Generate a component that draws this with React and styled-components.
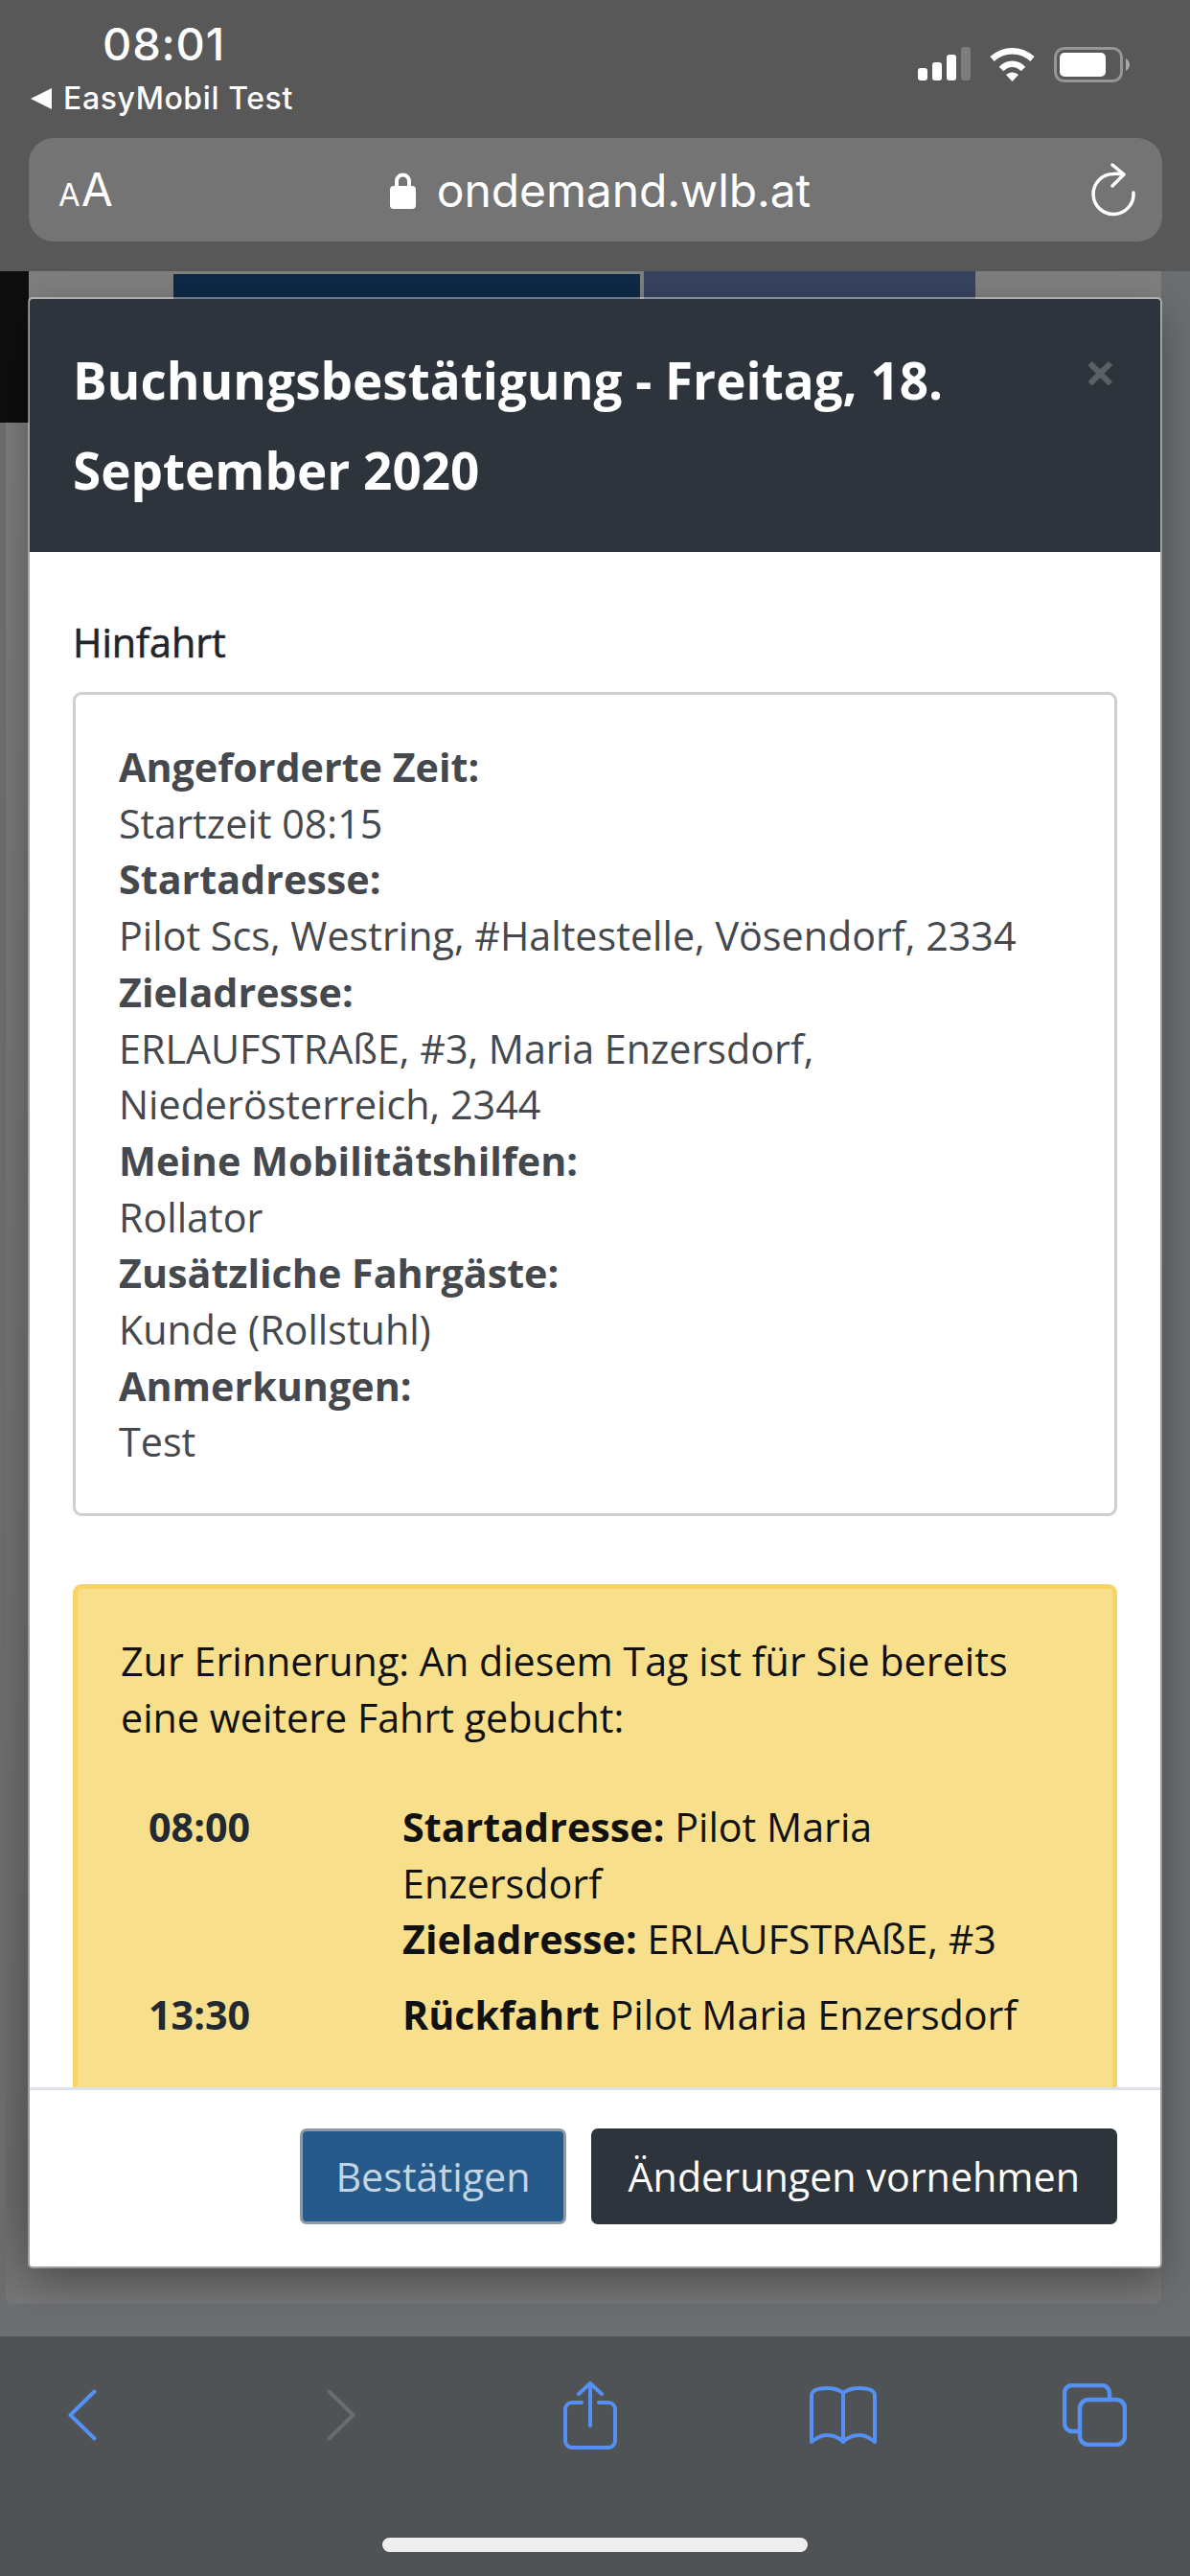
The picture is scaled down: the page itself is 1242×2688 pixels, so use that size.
import React from "react"
import styled, { createGlobalStyle } from "styled-components"

const GlobalStyle = createGlobalStyle`
  html, body {
    margin: 0;
    padding: 0;
    background: #585858;
  }
  * {
    box-sizing: border-box;
  }
`

const Screen = styled.div`
  display: flex;
  flex-direction: column;
  width: 1242px;
  height: 2688px;
  overflow: hidden;
  font-family: "Open Sans", sans-serif;
`

const TopBar = styled.header`
  display: flex;
  flex-direction: column;
  height: 283px;
  padding: 0 29px 0 30px;
  background: #585858;
  color: #fff;
  font-family: Inter, "Liberation Sans", sans-serif;
`

const StatusRow = styled.div`
  display: flex;
  justify-content: space-between;
  height: 144px;
`

const StatusLeft = styled.div`
  display: flex;
  flex-direction: column;
`

const Time = styled.div`
  margin: 21px 0 0 77px;
  font-size: 47px;
  line-height: 50px;
  font-weight: 500;
  letter-spacing: 0.8px;
`

const BackLink = styled.div`
  display: flex;
  align-items: center;
  gap: 12px;
  margin: 13px 0 0 2px;
  font-size: 32px;
  line-height: 38px;
  letter-spacing: 0.6px;
  font-weight: 500;
`

const BackArrow = styled.span`
  width: 0;
  height: 0;
  border-style: solid;
  border-width: 11px 22px 11px 0;
  border-color: transparent #fff transparent transparent;
`

const StatusIcons = styled.div`
  display: flex;
  align-items: flex-start;
  gap: 20px;
  margin: 49px 34px 0 0;
`

const UrlBar = styled.div`
  display: flex;
  align-items: center;
  justify-content: space-between;
  height: 108px;
  padding: 0 27px 0 31px;
  border-radius: 26px;
  background: #747474;
`

const ReaderLabel = styled.div`
  display: flex;
  align-items: baseline;
  width: 60px;
  font-size: 48px;
  line-height: 1;
  letter-spacing: 1px;
`

const SmallA = styled.span`
  font-size: 33px;
`

const Address = styled.div`
  display: flex;
  align-items: center;
  gap: 22px;
  margin-right: 6px;
  font-size: 48px;
  letter-spacing: -0.1px;
`

const PageArea = styled.main`
  position: relative;
  flex: 1;
  overflow: hidden;
  background: #6c6f72;
`

const BackdropCard = styled.div`
  position: absolute;
  left: 6px;
  top: 0;
  width: 1206px;
  height: 2121px;
  border-radius: 0 0 8px 8px;
  background: linear-gradient(#7f7f7f, #6a6a6a 95%, #777);
`

const BlackEdge = styled.div`
  position: absolute;
  left: 0;
  top: 0;
  width: 30px;
  height: 158px;
  background: #0e0e0e;
`

const Tile = styled.div`
  position: absolute;
  top: ${({ $inset }) => $inset}px;
  left: ${({ $left }) => $left}px;
  width: ${({ $width }) => $width}px;
  height: 40px;
  background: ${({ $color }) => $color};
`

const Modal = styled.section`
  position: absolute;
  left: 31px;
  top: 29px;
  display: flex;
  flex-direction: column;
  width: 1180px;
  height: 2053px;
  overflow: hidden;
  border-radius: 3px;
  background: #fff;
  box-shadow: 0 0 0 2px rgba(255, 255, 255, 0.4), 0 15px 45px rgba(0, 0, 0, 0.35);
`

const ModalHeader = styled.div`
  position: relative;
  flex: none;
  height: 264px;
  padding: 38px 45px 0;
  background: #2e343b;
`

const Title = styled.h2`
  margin: 0;
  width: 1040px;
  color: #fff;
  font-size: 53px;
  line-height: 94px;
  font-weight: 700;
`

const CloseMark = styled.span`
  position: absolute;
  top: 47px;
  right: 46px;
  color: #5a6066;
  font-size: 58px;
  line-height: 1;
  font-weight: 700;
`

const ModalBody = styled.div`
  flex: 1;
  min-height: 0;
  overflow: hidden;
  padding: 65px 45px 0;
`

const SectionLabel = styled.h3`
  margin: 0 0 23px;
  color: #212529;
  font-size: 41.25px;
  line-height: 58px;
  font-weight: 400;
  -webkit-text-stroke: 0.6px #212529;
`

const DetailCard = styled.div`
  height: 860px;
  padding: 46px 45px;
  border: 3px solid #cfcfcf;
  border-radius: 9px;
  color: #45484c;
  font-size: 41.25px;
  line-height: 58.7px;
`

const Line = styled.div`
  font-weight: ${({ $bold }) => ($bold ? 700 : 400)};
`

const Reminder = styled.div`
  height: 700px;
  margin-top: 71px;
  padding: 46px 45px 0;
  border: 5px solid #f8d466;
  border-bottom: 0;
  border-radius: 9px 9px 0 0;
  background: #f8df8b;
  color: #111;
  font-size: 41.25px;
  line-height: 58.5px;
`

const TripTable = styled.div`
  display: grid;
  grid-template-columns: 265px 1fr;
  row-gap: 20px;
  margin: 56px 0 0 29px;
`

const TripTime = styled.div`
  color: #212932;
  font-weight: 700;
`

const TripInfo = styled.div`
  width: 690px;
`

const ModalFooter = styled.div`
  display: flex;
  flex: none;
  justify-content: flex-end;
  gap: 26px;
  height: 187px;
  padding: 40px 45px 0;
  border-top: 3px solid #dee2e6;
`

const Button = styled.button`
  height: 100px;
  padding: 0 ${({ $pad }) => $pad}px;
  border: ${({ $muted }) => ($muted ? "3px solid #8d9aa6" : "0")};
  border-radius: 7px;
  background: ${({ $muted }) => ($muted ? "#265a8a" : "#2e343b")};
  color: ${({ $muted }) => ($muted ? "#c3d5e2" : "#fff")};
  font-family: "Open Sans", sans-serif;
  font-size: 41.25px;
`

const Toolbar = styled.nav`
  display: flex;
  flex-direction: column;
  flex: none;
  height: 250px;
  padding-top: 43px;
  background: #505356;
`

const ToolRow = styled.div`
  display: flex;
  align-items: center;
  height: 78px;
  padding-left: 71px;
`

const ToolSlot = styled.div`
  display: flex;
  margin-left: ${({ $gap }) => $gap}px;
`

const HomeBar = styled.div`
  align-self: center;
  width: 444px;
  height: 15px;
  margin-top: 89px;
  border-radius: 8px;
  background: #eee;
`

const Signal = () => (
  <svg width="55" height="35" viewBox="0 0 55 35">
    <rect x="0" y="22" width="10" height="13" rx="3" fill="#fff" />
    <rect x="15" y="16" width="10" height="19" rx="3" fill="#fff" />
    <rect x="30" y="8" width="10" height="27" rx="3" fill="#fff" />
    <rect x="45" y="0" width="10" height="35" rx="3" fill="#7c7c7c" />
  </svg>
)

const Wifi = () => (
  <svg width="47" height="36" viewBox="0 0 47 36" fill="none" stroke="#fff" strokeWidth="6.5">
    <path d="M2.5 12.5C15 1.5 32 1.5 44.5 12.5" />
    <path d="M12 23C19 16 28 16 35 23" />
    <path d="M23.5 36 17 29C21 25.5 26 25.5 30 29Z" fill="#fff" stroke="none" />
  </svg>
)

const Battery = () => (
  <svg width="79" height="37" viewBox="0 0 79 37">
    <rect x="1.5" y="1.5" width="69" height="34" rx="9" fill="none" stroke="#969696" strokeWidth="3" />
    <rect x="6" y="6" width="48" height="25" rx="5" fill="#fff" />
    <path d="M75 12c2.500 1.500 4 4 4 6.500s-1.500 5-4 6.500z" fill="#a8a8a8" />
  </svg>
)

const Lock = () => (
  <svg width="27" height="39" viewBox="0 0 27 39">
    <path d="M7 17V10a6.500 6.500 0 0 1 13 0v7" fill="none" stroke="#fff" strokeWidth="4" />
    <rect x="0" y="15" width="27" height="24" rx="4" fill="#fff" />
  </svg>
)

const Reload = () => (
  <svg width="48" height="56" viewBox="0 0 48 56" fill="none" stroke="#fff" strokeWidth="3.500" strokeLinecap="round" strokeLinejoin="round">
    <path d="M45 31A21 21 0 1 1 24 11.500C28 11 31 11.500 34 12" />
    <path d="M23 2 35 12 23 24" />
  </svg>
)

const Chevron = ({ color, flip }) => (
  <svg width="30" height="54" viewBox="0 0 30 54" fill="none" stroke={color} strokeWidth="4" strokeLinecap="round" strokeLinejoin="round">
    <path d={flip ? "M2.500 2.500 27.500 27 2.500 51.500" : "M27.500 2.500 2.500 27 27.500 51.500"} />
  </svg>
)

const Share = () => (
  <svg width="56" height="71" viewBox="0 0 56 71" fill="none" stroke="#5590f5" strokeWidth="4" strokeLinecap="round" strokeLinejoin="round">
    <path d="M19 22H9a7 7 0 0 0-7 7v33a7 7 0 0 0 7 7h38a7 7 0 0 0 7-7V29a7 7 0 0 0-7-7H37" />
    <path d="M28 46V3" />
    <path d="M16 13 28 2 40 13" />
  </svg>
)

const Book = () => (
  <svg width="70" height="60" viewBox="0 0 70 60" fill="none" stroke="#5590f5" strokeWidth="4" strokeLinecap="round" strokeLinejoin="round">
    <path d="M35 7C30 3 24 2 18 2 10 2 2 4 2 10V58C8 53 13 51 18 51c6 0 12 2 17 7 5-5 11-7 17-7 5 0 10 2 16 7V10c0-6-8-8-16-8-6 0-12 1-17 5V58" />
  </svg>
)

const Tabs = () => (
  <svg width="67" height="66" viewBox="0 0 67 66" fill="none" stroke="#5590f5" strokeWidth="4.500">
    <path d="M16 50H10a8 8 0 0 1-8-8V10a8 8 0 0 1 8-8h31a8 8 0 0 1 8 8v5" />
    <rect x="18" y="17" width="47" height="47" rx="9" />
  </svg>
)

const App = () => {
  return (
    <Screen>
      <GlobalStyle />
      <TopBar>
        <StatusRow>
          <StatusLeft>
            <Time>08:01</Time>
            <BackLink>
              <BackArrow />
              EasyMobil Test
            </BackLink>
          </StatusLeft>
          <StatusIcons>
            <Signal />
            <Wifi />
            <Battery />
          </StatusIcons>
        </StatusRow>
        <UrlBar>
          <ReaderLabel>
            <SmallA>A</SmallA>A
          </ReaderLabel>
          <Address>
            <Lock />
            ondemand.wlb.at
          </Address>
          <Reload />
        </UrlBar>
      </TopBar>

      <PageArea>
        <BackdropCard />
        <BlackEdge />
        <Tile $inset={3} $left={181} $width={487} $color="#0e2a47" />
        <Tile $inset={0} $left={672} $width={346} $color="#38445f" />
        <Modal>
          <ModalHeader>
            <Title>Buchungsbestätigung - Freitag, 18. September 2020</Title>
            <CloseMark>×</CloseMark>
          </ModalHeader>
          <ModalBody>
            <SectionLabel>Hinfahrt</SectionLabel>
            <DetailCard>
              <Line $bold>Angeforderte Zeit:</Line>
              <Line>Startzeit 08:15</Line>
              <Line $bold>Startadresse:</Line>
              <Line>Pilot Scs, Westring, #Haltestelle, Vösendorf, 2334</Line>
              <Line $bold>Zieladresse:</Line>
              <Line>ERLAUFSTRAßE, #3, Maria Enzersdorf,</Line>
              <Line>Niederösterreich, 2344</Line>
              <Line $bold>Meine Mobilitätshilfen:</Line>
              <Line>Rollator</Line>
              <Line $bold>Zusätzliche Fahrgäste:</Line>
              <Line>Kunde (Rollstuhl)</Line>
              <Line $bold>Anmerkungen:</Line>
              <Line>Test</Line>
            </DetailCard>
            <Reminder>
              Zur Erinnerung: An diesem Tag ist für Sie bereits eine weitere Fahrt gebucht:
              <TripTable>
                <TripTime>08:00</TripTime>
                <TripInfo>
                  <b>Startadresse:</b> Pilot Maria Enzersdorf
                  <br />
                  <b>Zieladresse:</b> ERLAUFSTRAßE, #3
                </TripInfo>
                <TripTime>13:30</TripTime>
                <TripInfo>
                  <b>Rückfahrt</b> Pilot Maria Enzersdorf
                </TripInfo>
              </TripTable>
            </Reminder>
          </ModalBody>
          <ModalFooter>
            <Button $muted $pad={34}>Bestätigen</Button>
            <Button $pad={39}>Änderungen vornehmen</Button>
          </ModalFooter>
        </Modal>
      </PageArea>

      <Toolbar>
        <ToolRow>
          <ToolSlot $gap={0}><Chevron color="#5590f5" /></ToolSlot>
          <ToolSlot $gap={240}><Chevron color="#6a6c6f" flip /></ToolSlot>
          <ToolSlot $gap={217}><Share /></ToolSlot>
          <ToolSlot $gap={201}><Book /></ToolSlot>
          <ToolSlot $gap={194}><Tabs /></ToolSlot>
        </ToolRow>
        <HomeBar />
      </Toolbar>
    </Screen>
  )
}

export default App
